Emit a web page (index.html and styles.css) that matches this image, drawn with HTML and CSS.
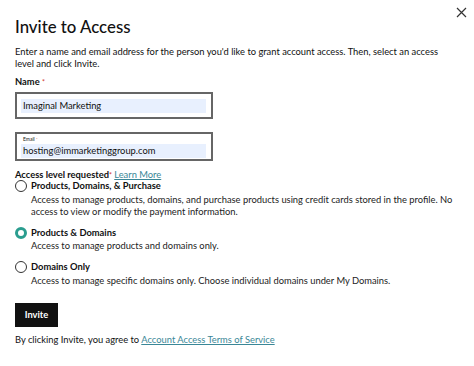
FILE: index.html
```html
<!DOCTYPE html>
<html lang="en">
<head>
    <meta charset="UTF-8">
    <meta name="viewport" content="width=device-width, initial-scale=1.0">
    <title>Invite to Access</title>
    <link rel="stylesheet" href="styles.css">
</head>
<body>
    <div class="modal">
        <button class="close" aria-label="Close">
            <svg width="11" height="11" viewBox="0 0 11 11"><path d="M1 1L10 10M10 1L1 10" stroke="#333" stroke-width="1.2" fill="none"/></svg>
        </button>
        <h1 class="title">Invite to Access</h1>
        <p class="intro">Enter a name and email address for the person you'd like to grant account access. Then, select an access level and click Invite.</p>

        <label class="label">Name <span class="req">*</span></label>
        <div class="field">
            <div class="field-value">Imaginal Marketing</div>
        </div>

        <div class="field field-email">
            <div class="field-small">Email <span class="req">*</span></div>
            <div class="field-value">hosting@immarketinggroup.com</div>
        </div>

        <div class="access-head">Access level requested<span class="req">*</span> <a href="#" class="link">Learn More</a></div>

        <div class="option">
            <span class="radio"></span>
            <div class="option-text">
                <div class="option-title">Products, Domains, &amp; Purchase</div>
                <div class="option-desc">Access to manage products, domains, and purchase products using credit cards stored in the profile. No access to view or modify the payment information.</div>
            </div>
        </div>
        <div class="option">
            <span class="radio checked"></span>
            <div class="option-text">
                <div class="option-title">Products &amp; Domains</div>
                <div class="option-desc">Access to manage products and domains only.</div>
            </div>
        </div>
        <div class="option">
            <span class="radio"></span>
            <div class="option-text">
                <div class="option-title">Domains Only</div>
                <div class="option-desc">Access to manage specific domains only. Choose individual domains under My Domains.</div>
            </div>
        </div>

        <button class="invite">Invite</button>
        <p class="terms">By clicking Invite, you agree to <a href="#" class="link">Account Access Terms of Service</a></p>
    </div>
</body>
</html>
```

FILE: styles.css
```css
body {
    margin: 0;
    font-family: Lato, Arial, sans-serif;
    color: #111;
    background: #fff;
}
.modal {
    position: relative;
    padding: 14px 15px;
}
.close {
    position: absolute;
    top: 6px;
    right: 7px;
    border: none;
    background: none;
    padding: 0;
    cursor: pointer;
}
.title {
    margin: 0;
    font-size: 16.8px;
    font-weight: 500;
    line-height: 26px;
}
.intro {
    margin: 6px 0 0;
    font-size: 9.35px;
    line-height: 12px;
}
.label {
    display: block;
    margin-top: 6px;
    font-size: 9.35px;
    font-weight: 700;
    line-height: 12px;
}
.req {
    color: #d0342c;
    font-size: 7px;
    vertical-align: top;
    font-weight: 400;
}
.field {
    width: 198px;
    height: 27px;
    border: 2px solid #666;
    box-sizing: border-box;
    margin-top: 4px;
    padding: 4.5px 5px 0 4px;
}
.field-value {
    background: #e8f0fe;
    font-size: 9.35px;
    line-height: 14px;
    padding-left: 2px;
}
.field-email {
    height: 29px;
    margin-top: 13px;
    padding-top: 1px;
}
.field-small {
    font-size: 5px;
    line-height: 9px;
    padding-left: 2px;
}
.field-small .req {
    font-size: 4px;
}
.access-head {
    margin-top: 8px;
    margin-bottom: -1px;
    font-size: 9.35px;
    font-weight: 700;
    line-height: 12px;
}
.access-head .link {
    font-weight: 400;
}
.link {
    color: #3a8797;
}
.option {
    display: flex;
    gap: 4px;
    margin-bottom: 9px;
}
.radio {
    width: 12px;
    height: 12px;
    box-sizing: border-box;
    border: 1.3px solid #333;
    border-radius: 50%;
    flex-shrink: 0;
}
.radio.checked {
    border: 3.5px solid #2a9d8f;
    background: #fff;
}
.option-title {
    font-size: 9.35px;
    font-weight: 700;
    line-height: 12px;
}
.option-desc {
    margin-top: 1.5px;
    font-size: 9.35px;
    line-height: 12px;
    color: #222;
}
.invite {
    margin-top: 7px;
    background: #111;
    color: #fff;
    border: none;
    font-family: inherit;
    font-size: 9.35px;
    font-weight: 700;
    width: 43px;
    height: 24px;
    cursor: pointer;
}
.terms {
    margin: 7px 0 0;
    font-size: 9.35px;
    line-height: 12px;
}
```
